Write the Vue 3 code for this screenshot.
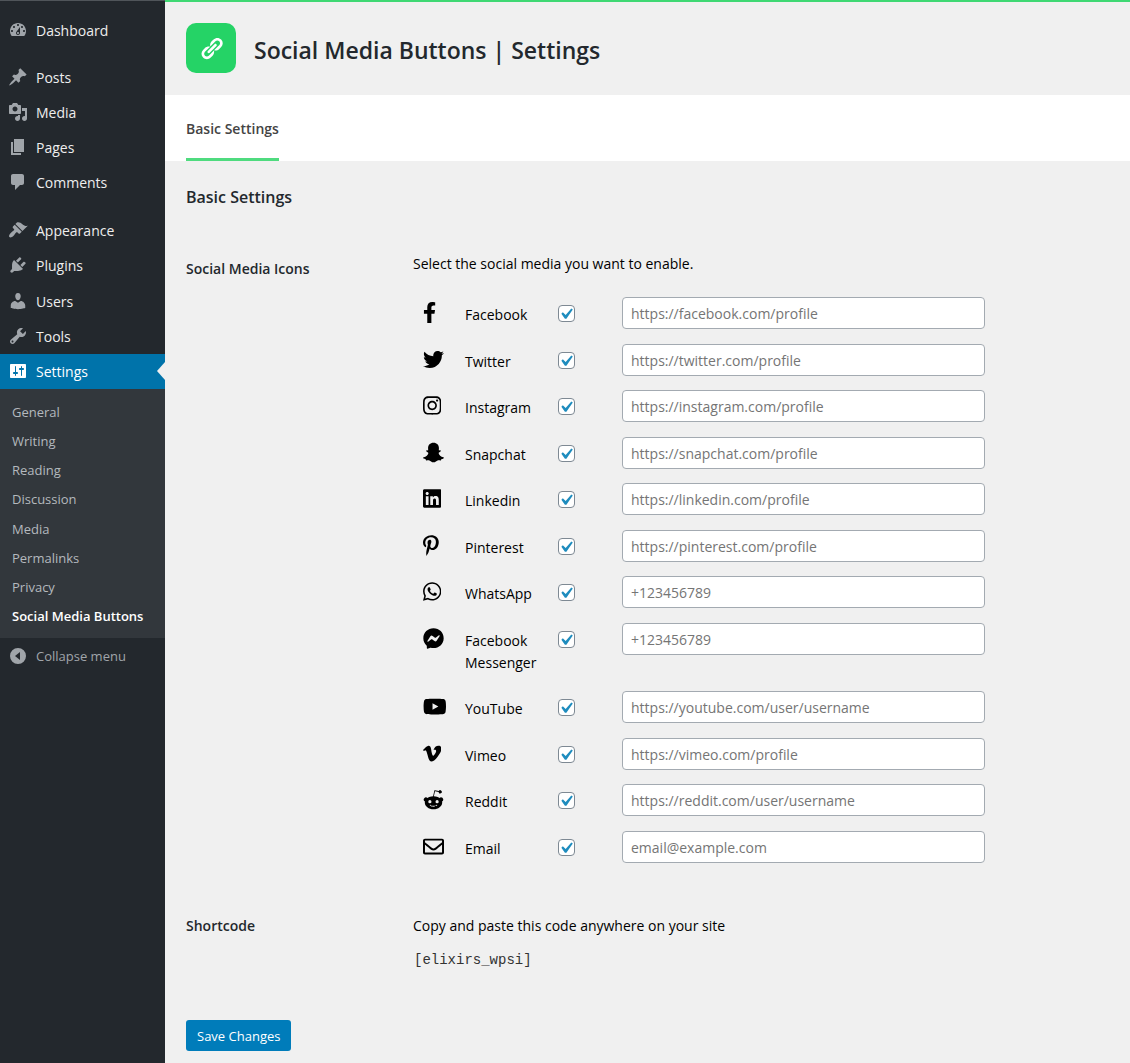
<script setup>
import { reactive } from 'vue'

const menuGroups = [
  [
    { name: 'Dashboard', icon: 'M3.76 16h12.48c1.1-1.37 1.76-3.11 1.76-5 0-4.42-3.58-8-8-8s-8 3.58-8 8c0 1.89.66 3.63 1.76 5zM10 4c.55 0 1 .45 1 1s-.45 1-1 1-1-.45-1-1 .45-1 1-1zM6 6c.55 0 1 .45 1 1s-.45 1-1 1-1-.45-1-1 .45-1 1-1zm8 0c.55 0 1 .45 1 1s-.45 1-1 1-1-.45-1-1 .45-1 1-1zm-5.37 5.55L12 7v6c0 1.1-.9 2-2 2s-2-.9-2-2c0-.57.24-1.08.63-1.45zM4 10c.55 0 1 .45 1 1s-.45 1-1 1-1-.45-1-1 .45-1 1-1zm12 0c.55 0 1 .45 1 1s-.45 1-1 1-1-.45-1-1 .45-1 1-1zm-5 3c0-.55-.45-1-1-1s-1 .45-1 1 .45 1 1 1 1-.45 1-1z' },
  ],
  [
    { name: 'Posts', icon: 'M10.44 3.02l1.82-1.82 6.36 6.35-1.83 1.82c-1.05-.68-2.48-.57-3.41.36l-.75.75c-.92.93-1.04 2.35-.35 3.41l-1.83 1.82-2.41-2.41-2.8 2.79c-.42.42-3.38 2.71-3.8 2.29s1.86-3.39 2.28-3.81l2.79-2.79L4.1 9.36l1.83-1.82c1.05.69 2.48.57 3.4-.36l.75-.75c.93-.92 1.05-2.35.36-3.41z' },
    { name: 'Media', icon: 'M13 11V4c0-.55-.45-1-1-1h-1.67L9 1H5L3.67 3H2c-.55 0-1 .45-1 1v7c0 .55.45 1 1 1h10c.55 0 1-.45 1-1zM7 4.5c1.38 0 2.5 1.12 2.5 2.5S8.38 9.5 7 9.5 4.5 8.38 4.5 7 5.62 4.5 7 4.5zM14 6h5v10.5c0 1.38-1.12 2.5-2.5 2.5S14 17.88 14 16.5s1.12-2.5 2.5-2.5c.17 0 .34.02.5.05V9h-3V6zm-4 8.05V13h2v3.5c0 1.38-1.12 2.5-2.5 2.5S7 17.88 7 16.5 8.12 14 9.5 14c.17 0 .34.02.5.05z' },
    { name: 'Pages', icon: 'M6 15V2h10v13H6zm-1 1h8v2H3V5h2v11z' },
    { name: 'Comments', icon: 'M5 2h9c1.1 0 2 .9 2 2v7c0 1.1-.9 2-2 2h-2l-5 5v-5H5c-1.1 0-2-.9-2-2V4c0-1.1.9-2 2-2z' },
  ],
  [
    { name: 'Appearance', icon: 'M14.48 11.06L7.41 3.99l1.5-1.5c.5-.56 2.3-.47 3.51.32 1.21.8 1.43 1.28 2.91 2.1 1.18.64 2.45 1.26 4.45.85zm-.71.71L6.7 4.7 4.93 6.47c-.39.39-.39 1.02 0 1.41l1.06 1.06c.39.39.39 1.03 0 1.42-.6.6-1.43 1.11-2.21 1.69-.35.26-.7.53-1.01.84C1.43 14.23.4 16.08 1.4 17.07c.99 1 2.84-.03 4.18-1.36.31-.31.58-.66.85-1.02.57-.78 1.08-1.61 1.69-2.21.39-.39 1.02-.39 1.41 0l1.06 1.06c.39.39 1.02.39 1.41 0z' },
    { name: 'Plugins', icon: 'M13.11 4.36L9.87 7.6 8 5.73l3.24-3.24c.35-.34 1.05-.2 1.56.32.52.51.66 1.21.31 1.55zm-8 1.77l.91-1.12 9.01 9.01-1.19.84c-.71.71-2.63 1.16-3.82 1.16H6.14L4.9 17.26c-.59.59-1.54.59-2.12 0-.59-.58-.59-1.53 0-2.12l1.24-1.24v-3.88c0-1.13.4-3.19 1.09-3.89zm7.26 3.97l3.24-3.24c.34-.35 1.04-.21 1.55.31.52.51.66 1.21.31 1.55l-3.24 3.25z' },
    { name: 'Users', icon: 'M10 9.25c-2.27 0-2.73-3.44-2.73-3.44C7 4.02 7.82 2 9.97 2c2.16 0 2.98 2.02 2.71 3.81 0 0-.41 3.44-2.68 3.44zm0 2.57L12.72 10c2.39 0 4.52 2.33 4.52 4.53v2.49s-3.65 1.13-7.24 1.13c-3.65 0-7.24-1.13-7.24-1.13v-2.49c0-2.25 1.94-4.48 4.47-4.48z' },
    { name: 'Tools', icon: 'M16.68 9.77c-1.34 1.34-3.3 1.67-4.95.99l-5.41 6.52c-.99.99-2.59.99-3.58 0s-.99-2.59 0-3.57l6.52-5.42c-.68-1.65-.35-3.61.99-4.95 1.28-1.28 3.12-1.62 4.72-1.06l-2.89 2.89 2.82 2.82 2.86-2.87c.53 1.58.18 3.39-1.08 4.65zM3.81 16.21c.4.39 1.04.39 1.43 0 .4-.4.4-1.04 0-1.43-.39-.4-1.03-.4-1.43 0-.39.39-.39 1.03 0 1.43z' },
    { name: 'Settings', current: true, icon: 'M18 16V4c0-.55-.45-1-1-1H3c-.55 0-1 .45-1 1v12c0 .55.45 1 1 1h14c.55 0 1-.45 1-1zM8 11h1c.55 0 1 .45 1 1s-.45 1-1 1H8v1.5c0 .28-.22.5-.5.5s-.5-.22-.5-.5V13H6c-.55 0-1-.45-1-1s.45-1 1-1h1V5.5c0-.28.22-.5.5-.5s.5.22.5.5V11zm5-2h-1c-.55 0-1-.45-1-1s.45-1 1-1h1V5.5c0-.28.22-.5.5-.5s.5.22.5.5V7h1c.55 0 1 .45 1 1s-.45 1-1 1h-1v5.5c0 .28-.22.5-.5.5s-.5-.22-.5-.5V9z' },
  ],
]

const submenu = ['General', 'Writing', 'Reading', 'Discussion', 'Media', 'Permalinks', 'Privacy', 'Social Media Buttons']

const networks = reactive([
  { id: 'facebook', name: 'Facebook', on: true, url: '', hint: 'https://facebook.com/profile', w: 320, d: 'M279.14 288l14.22-92.66h-88.91v-60.13c0-25.35 12.42-50.06 52.24-50.06h40.42V6.26S260.43 0 225.36 0c-73.22 0-121.08 44.38-121.08 124.72v70.62H22.89V288h81.39v224h100.17V288z' },
  { id: 'twitter', name: 'Twitter', on: true, url: '', hint: 'https://twitter.com/profile', w: 512, d: 'M459.37 151.716c.325 4.548.325 9.097.325 13.645 0 138.72-105.583 298.558-298.558 298.558-59.452 0-114.68-17.219-161.137-47.106 8.447.974 16.568 1.299 25.34 1.299 49.055 0 94.213-16.568 130.274-44.832-46.132-.975-84.792-31.188-98.112-72.772 6.498.974 12.995 1.624 19.818 1.624 9.421 0 18.843-1.3 27.614-3.573-48.081-9.747-84.143-51.98-84.143-102.985v-1.299c13.969 7.797 30.214 12.67 47.431 13.319-28.264-18.843-46.781-51.005-46.781-87.391 0-19.492 5.197-37.36 14.294-52.954 51.655 63.675 129.3 105.258 216.365 109.807-1.624-7.797-2.599-15.918-2.599-24.04 0-57.828 46.782-104.934 104.934-104.934 30.213 0 57.502 12.67 76.67 33.137 23.715-4.548 46.456-13.32 66.599-25.34-7.798 24.366-24.366 44.833-46.132 57.827 21.117-2.273 41.584-8.122 60.426-16.243-14.292 20.791-32.161 39.308-52.628 54.253z' },
  { id: 'instagram', name: 'Instagram', on: true, url: '', hint: 'https://instagram.com/profile', w: 448, d: 'M224.1 141c-63.6 0-114.9 51.3-114.9 114.9s51.3 114.9 114.9 114.9S339 319.5 339 255.9 287.7 141 224.1 141zm0 189.6c-41.1 0-74.7-33.5-74.7-74.7s33.5-74.7 74.7-74.7 74.7 33.5 74.7 74.7-33.6 74.7-74.7 74.7zm146.4-194.3c0 14.9-12 26.8-26.8 26.8-14.9 0-26.8-12-26.8-26.8s12-26.8 26.8-26.8 26.8 12 26.8 26.8zm76.1 27.2c-1.7-35.9-9.9-67.7-36.2-93.9-26.2-26.2-58-34.4-93.9-36.2-37-2.1-147.9-2.1-184.9 0-35.8 1.7-67.6 9.9-93.9 36.1s-34.4 58-36.2 93.9c-2.1 37-2.1 147.9 0 184.9 1.7 35.9 9.9 67.7 36.2 93.9s58 34.4 93.9 36.2c37 2.1 147.9 2.1 184.9 0 35.9-1.7 67.7-9.9 93.9-36.2 26.2-26.2 34.4-58 36.2-93.9 2.1-37 2.1-147.8 0-184.8zM398.8 388c-7.8 19.6-22.9 34.7-42.6 42.6-29.5 11.7-99.5 9-132.1 9s-102.7 2.6-132.1-9c-19.6-7.8-34.7-22.9-42.6-42.6-11.7-29.5-9-99.5-9-132.1s-2.6-102.7 9-132.1c7.8-19.6 22.9-34.7 42.6-42.6 29.5-11.7 99.5-9 132.1-9s102.7-2.6 132.1 9c19.6 7.8 34.7 22.9 42.6 42.6 11.7 29.5 9 99.5 9 132.1s2.7 102.7-9 132.1z' },
  { id: 'snapchat', name: 'Snapchat', on: true, url: '', hint: 'https://snapchat.com/profile', w: 512, d: 'M256 16c-84 0-132 56-132 128 0 22 2 42 3 60-14 6-34-8-45 4-12 14 4 28 20 36 14 7 30 10 28 28-8 40-54 88-114 98-24 6-14 28 8 36 18 7 38 8 42 16 4 10 0 24 16 26 22 2 46-8 74 2 26 10 52 46 100 46s74-36 100-46c28-10 52 0 74-2 16-2 12-16 16-26 4-8 24-9 42-16 22-8 32-30 8-36-60-10-106-58-114-98-2-18 14-21 28-28 16-8 32-22 20-36-11-12-31 2-45-4 1-18 3-38 3-60 0-72-48-128-132-128z' },
  { id: 'linkedin', name: 'Linkedin', on: true, url: '', hint: 'https://linkedin.com/profile', w: 448, d: 'M416 32H31.9C14.3 32 0 46.5 0 64.3v383.4C0 465.5 14.3 480 31.9 480H416c17.6 0 32-14.5 32-32.3V64.3c0-17.8-14.4-32.3-32-32.3zM135.4 416H69V202.2h66.5V416zm-33.2-243c-21.3 0-38.5-17.3-38.5-38.5S80.9 96 102.2 96c21.2 0 38.5 17.3 38.5 38.5 0 21.3-17.2 38.5-38.5 38.5zm282.1 243h-66.4V312c0-24.8-.5-56.7-34.5-56.7-34.6 0-39.9 27-39.9 54.9V416h-66.4V202.2h63.7v29.2h.9c8.9-16.8 30.6-34.5 62.9-34.5 67.2 0 79.7 44.3 79.7 101.9V416z' },
  { id: 'pinterest', name: 'Pinterest', on: true, url: '', hint: 'https://pinterest.com/profile', w: 384, d: 'M204 6.5C101.4 6.5 0 74.9 0 185.6 0 256 39.6 296 63.6 296c9.9 0 15.6-27.6 15.6-35.4 0-9.3-23.7-29.1-23.7-67.8 0-80.4 61.2-137.4 140.4-137.4 68.1 0 118.5 38.7 118.5 109.8 0 53.1-21.3 152.7-90.3 152.7-24.9 0-46.2-18-46.2-43.8 0-37.8 26.4-74.4 26.4-113.4 0-66.2-93.9-54.2-93.9 25.8 0 16.8 2.1 35.4 9.6 50.7-13.8 59.4-42 147.9-42 209.1 0 18.9 2.7 37.5 4.5 56.4 3.4 3.8 1.7 3.4 6.9 1.5 50.4-69 48.6-82.5 71.4-172.8 12.3 23.4 44.1 36 69.3 36 106.2 0 153.9-103.5 153.9-196.8C384 71.3 298.2 6.5 204 6.5z' },
  { id: 'whatsapp', name: 'WhatsApp', on: true, url: '', hint: '+123456789', w: 448, d: 'M380.9 97.1C339 55.1 283.2 32 223.9 32c-122.4 0-222 99.6-222 222 0 39.1 10.2 77.3 29.6 111L0 480l117.7-30.9c32.4 17.7 68.9 27 106.1 27h.1c122.3 0 224.1-99.6 224.1-222 0-59.3-25.2-115-67.1-157zm-157 341.6c-33.2 0-65.7-8.9-94-25.7l-6.7-4-69.8 18.3L72 359.2l-4.4-7c-18.5-29.4-28.2-63.3-28.2-98.2 0-101.7 82.8-184.5 184.6-184.5 49.3 0 95.6 19.2 130.4 54.1 34.8 34.9 56.2 81.2 56.1 130.5 0 101.8-84.9 184.6-186.6 184.6zm101.2-138.2c-5.5-2.8-32.8-16.2-37.9-18-5.1-1.9-8.8-2.8-12.5 2.8-3.7 5.6-14.3 18-17.6 21.8-3.2 3.7-6.5 4.2-12 1.4-32.6-16.3-54-29.1-75.5-66-5.7-9.8 5.7-9.1 16.3-30.3 1.8-3.7.9-6.9-.5-9.7-1.4-2.8-12.5-30.1-17.1-41.2-4.5-10.8-9.1-9.3-12.5-9.5-3.2-.2-6.9-.2-10.6-.2-3.7 0-9.7 1.4-14.8 6.9-5.1 5.6-19.4 19-19.4 46.3 0 27.3 19.9 53.7 22.6 57.4 2.8 3.7 39.1 59.7 94.8 83.8 35.2 15.2 49 16.5 66.6 13.9 10.7-1.6 32.8-13.4 37.4-26.4 4.6-13 4.6-24.1 3.2-26.4-1.3-2.5-5-3.9-10.5-6.6z' },
  { id: 'messenger', name: 'Facebook Messenger', on: true, url: '', hint: '+123456789', w: 512, d: 'M256.55 8C116.52 8 8 110.34 8 248.57c0 72.3 29.71 134.78 78.07 177.94 8.35 7.51 6.63 11.86 8.05 58.23A19.92 19.92 0 0 0 122 502.31c52.91-23.3 53.59-25.14 62.56-22.7C337.85 521.8 504 423.7 504 248.57 504 110.34 396.59 8 256.55 8zm149.24 185.13l-73 115.57a37.37 37.37 0 0 1-53.91 9.93l-58.08-43.47a15 15 0 0 0-18 0l-78.37 59.44c-10.46 7.93-24.16-4.6-17.11-15.67l73-115.57a37.36 37.36 0 0 1 53.91-9.93l58.06 43.46a15 15 0 0 0 18 0l78.41-59.38c10.44-7.98 24.14 4.54 17.09 15.62z' },
  { id: 'youtube', name: 'YouTube', on: true, url: '', hint: 'https://youtube.com/user/username', w: 576, d: 'M549.655 124.083c-6.281-23.65-24.787-42.276-48.284-48.597C458.781 64 288 64 288 64S117.22 64 74.629 75.486c-23.497 6.322-42.003 24.947-48.284 48.597-11.412 42.867-11.412 132.305-11.412 132.305s0 89.438 11.412 132.305c6.281 23.65 24.787 41.5 48.284 47.821C117.22 448 288 448 288 448s170.78 0 213.371-11.486c23.497-6.321 42.003-24.171 48.284-47.821 11.412-42.867 11.412-132.305 11.412-132.305s0-89.438-11.412-132.305zm-317.51 213.508V175.185l142.739 81.205-142.739 81.201z' },
  { id: 'vimeo', name: 'Vimeo', on: true, url: '', hint: 'https://vimeo.com/profile', w: 448, d: 'M447.8 153.6c-2 43.6-32.4 103.3-91.4 179.1-60.9 79.2-112.4 118.8-154.6 118.8-26.1 0-48.2-24.1-66.3-72.3C100.3 250 85.3 174.3 56.2 174.3c-3.4 0-15.1 7.1-35.2 21.1L0 168.2c51.6-45.3 100.9-95.7 131.8-98.5 34.9-3.4 56.3 20.5 64.4 71.5 28.7 181.5 41.4 208.9 93.6 126.7 18.7-29.6 28.8-52.1 30.2-67.6 4.8-45.9-35.8-42.8-63.3-31 22-72.1 64.1-107.1 126.2-105.1 45.8 1.2 67.5 31.1 64.9 89.4z' },
  { id: 'reddit', name: 'Reddit', on: true, url: '', hint: 'https://reddit.com/user/username', w: 512, d: 'M440 203c-15 0-28 6-38 16-36-25-84-40-137-42l28-124 88 20a38 38 0 1 0 4-22l-97-22c-5-1-10 2-11 7l-31 141c-53 2-101 18-136 42a53 53 0 1 0-63 84c-2 9-3 18-3 27 0 92 95 166 212 166s212-74 212-166c0-9-1-18-3-27A53 53 0 0 0 440 203zM129 309a39 39 0 1 1 78 0 39 39 0 1 1-78 0zm215 93c-38 38-138 38-176 0-4-4-4-10 0-14 3-4 10-4 14 0 28 29 118 30 148 0 4-4 10-4 14 0 4 4 4 10 0 14zm0-54a39 39 0 1 1 0-78 39 39 0 1 1 0 78z' },
  { id: 'email', name: 'Email', on: true, url: '', hint: 'email@example.com', w: 512, d: 'M464 64H48C21.49 64 0 85.49 0 112v288c0 26.51 21.49 48 48 48h416c26.51 0 48-21.49 48-48V112c0-26.51-21.49-48-48-48zm0 48v40.805c-22.422 18.259-58.168 46.651-134.587 106.49-16.841 13.247-50.201 45.072-73.413 44.701-23.208.375-56.579-31.459-73.413-44.701C106.18 199.465 70.425 171.067 48 152.805V112h416zM48 400V214.398c22.914 18.251 55.409 43.862 104.938 82.646 21.857 17.205 60.134 55.186 103.062 54.955 42.717.231 80.509-37.199 103.053-54.947 49.528-38.783 82.032-64.401 104.947-82.653V400H48z' },
])
</script>

<template>
  <div class="admin">
    <nav class="sidebar" aria-label="Main menu">
      <ul v-for="(group, i) in menuGroups" :key="i" class="menu">
        <li v-for="item in group" :key="item.name">
          <a href="#" class="menu-link" :class="{ current: item.current }">
            <svg viewBox="0 0 20 20" aria-hidden="true"><path :d="item.icon" /></svg>
            <span>{{ item.name }}</span>
          </a>
        </li>
      </ul>
      <ul class="submenu">
        <li v-for="name in submenu" :key="name">
          <a href="#" :class="{ active: name === 'Social Media Buttons' }">{{ name }}</a>
        </li>
      </ul>
      <button type="button" class="collapse">
        <svg viewBox="0 0 20 20" aria-hidden="true"><path fill-rule="evenodd" d="M10 2a8 8 0 1 0 0 16 8 8 0 0 0 0-16zM12 6v8l-5-4z" /></svg>
        <span>Collapse menu</span>
      </button>
    </nav>

    <main class="content">
      <header class="page-head">
        <span class="logo">
          <svg viewBox="0 0 20 20" aria-hidden="true"><path d="M17.74 2.76c1.68 1.69 1.68 4.41 0 6.1l-1.53 1.52c-1.12 1.12-2.7 1.47-4.14 1.09l2.62-2.61.76-.77.76-.76c.84-.84.84-2.2 0-3.04-.84-.85-2.2-.85-3.04 0l-.77.76-3.38 3.38c-.37-1.44-.02-3.02 1.1-4.14l1.52-1.53c1.69-1.68 4.42-1.68 6.1 0zM8.59 13.43l5.34-5.34c.42-.42.42-1.1 0-1.52-.44-.43-1.13-.39-1.53 0l-5.33 5.34c-.42.42-.42 1.1 0 1.52.44.43 1.13.39 1.52 0zm-.76 2.29l4.14-4.15c.38 1.44.03 3.02-1.09 4.14l-1.52 1.53c-1.69 1.68-4.41 1.68-6.1 0-1.68-1.68-1.68-4.42 0-6.1l1.53-1.52c1.12-1.12 2.7-1.47 4.14-1.1l-4.14 4.15c-.85.84-.85 2.2 0 3.05.84.84 2.2.84 3.04 0z" /></svg>
        </span>
        <h1>Social Media Buttons | Settings</h1>
      </header>
      <nav class="tabs" aria-label="Sections"><a href="#" class="tab">Basic Settings</a></nav>

      <form class="settings" @submit.prevent>
        <h2>Basic Settings</h2>
        <section class="field">
          <h3>Social Media Icons</h3>
          <div class="field-body">
            <p>Select the social media you want to enable.</p>
            <ul class="networks">
              <li v-for="n in networks" :key="n.id">
                <span class="glyph"><svg :viewBox="`0 0 ${n.w} 512`" aria-hidden="true"><path :d="n.d" fill-rule="evenodd" /></svg></span>
                <label :for="`${n.id}-on`">{{ n.name }}</label>
                <span class="check">
                  <input :id="`${n.id}-on`" v-model="n.on" type="checkbox">
                  <svg v-if="n.on" viewBox="0 0 20 20" aria-hidden="true"><path d="M14.83 4.89l1.34.94-5.81 8.38H9.02L5.78 9.67l1.34-1.25 2.57 2.4z" /></svg>
                </span>
                <input v-model="n.url" class="text" type="text" :placeholder="n.hint" :aria-label="`${n.name} address`">
              </li>
            </ul>
          </div>
        </section>
        <section class="field shortcode">
          <h3>Shortcode</h3>
          <div class="field-body">
            <p>Copy and paste this code anywhere on your site</p>
            <code>[elixirs_wpsi]</code>
          </div>
        </section>
        <button type="submit" class="save">Save Changes</button>
      </form>
    </main>
  </div>
</template>

<style>
body {
  margin: 0;
  background: #f0f0f0;
}
</style>

<style scoped>
.admin {
  display: flex;
  min-height: 100vh;
  font: 14px/22px "Open Sans", "Noto Sans", sans-serif;
  color: #000;
}
ul, h1, h2, h3, p {
  margin: 0;
  padding: 0;
  list-style: none;
}
a { text-decoration: none; }
svg { display: block; fill: currentColor; }

.sidebar {
  box-sizing: border-box;
  flex: 0 0 165px;
  padding-top: 11px;
  border-top: 1px solid #50555a;
  background: #23282d;
}
.menu {
  display: flex;
  flex-direction: column;
  margin-bottom: 12px;
}
.menu:nth-of-type(2) { height: 141px; }
.menu:nth-of-type(3) {
  height: 177px;
  margin-bottom: 0;
}
.menu li {
  display: flex;
  flex: 1;
}
.menu-link, .collapse {
  position: relative;
  display: flex;
  flex: 1;
  align-items: center;
  gap: 8px;
  min-height: 35px;
  padding: 0 8px;
  color: #eee;
}
.menu-link span { padding-top: 2px; }
.menu-link svg, .collapse svg {
  width: 20px;
  height: 20px;
  color: #a0a5aa;
}
.menu-link.current, .menu-link.current svg { color: #fff; }
.menu-link.current { background: #0073aa; }
.menu-link.current::after {
  content: "";
  position: absolute;
  right: 0;
  top: 50%;
  margin-top: -9px;
  border: solid transparent;
  border-width: 9px 8px 9px 0;
  border-right-color: #f0f0f0;
}
.submenu {
  display: grid;
  grid-auto-rows: 1fr;
  box-sizing: border-box;
  height: 249px;
  padding: 8px 0 7px 12px;
  background: #32373c;
  font-size: 13px;
}
.submenu li {
  display: flex;
  align-items: center;
}
.submenu a { color: #b4b9be; }
.submenu a.active {
  color: #fff;
  font-weight: 600;
}
.collapse {
  width: 100%;
  border: 0;
  background: none;
  font: inherit;
  font-size: 13px;
  color: #a0a5aa;
}

.content {
  flex: 1;
  min-width: 0;
  border-top: 2px solid #3fd873;
}
.page-head {
  display: flex;
  align-items: center;
  gap: 18px;
  padding: 21px 21px 22px;
}
.logo {
  display: grid;
  place-items: center;
  width: 50px;
  height: 50px;
  border-radius: 10px;
  background: #25d366;
  color: #fff;
}
.logo svg {
  width: 25px;
  height: 25px;
}
h1 {
  padding-top: 3px;
  font-size: 23px;
  line-height: 30px;
  font-weight: 600;
  color: #23282d;
}
.tabs {
  display: flex;
  padding: 0 21px;
  background: #fff;
}
.tab {
  padding: 23px 0 18px;
  border-bottom: 3px solid #4fdb7f;
  font-weight: 600;
  color: #444;
}
.settings { padding: 24px 21px 12px; }
h2 {
  font-size: 16px;
  line-height: 24px;
  font-weight: 600;
  color: #23282d;
}
.field {
  display: flex;
  margin-top: 44px;
}
h3 {
  flex: 0 0 227px;
  padding-top: 5px;
  font-size: 14px;
  line-height: 22px;
  font-weight: 600;
  color: #23282d;
}
.field-body {
  flex: 1;
  min-width: 0;
}
.networks {
  padding: 22px 0 0 10px;
}
.networks li {
  display: flex;
  align-items: flex-start;
  min-height: 46px;
}
.networks li:nth-child(odd) { min-height: 47px; }
.glyph { flex: 0 0 42px; }
.glyph svg {
  height: 21px;
  margin-top: 5px;
}
.networks label {
  flex: 0 0 76px;
  margin-right: 17px;
  padding: 7px 0 17px;
  line-height: 22px;
}
.networks li:not(:nth-child(8)) label { padding-bottom: 0; }
.check {
  position: relative;
  flex: 0 0 64px;
  padding-top: 8px;
}
.check input {
  appearance: none;
  display: block;
  box-sizing: border-box;
  width: 17px;
  height: 17px;
  margin: 0;
  border: 1px solid #7e8993;
  border-radius: 4px;
  background: #fff;
}
.check svg {
  position: absolute;
  left: -3px;
  top: 6px;
  width: 22px;
  height: 22px;
  color: #1e8cbe;
  pointer-events: none;
}
.text {
  box-sizing: border-box;
  flex: 0 1 363px;
  min-width: 0;
  height: 32px;
  padding: 1px 8px;
  border: 1px solid #a3aab1;
  border-radius: 4px;
  background: #fff;
  font: inherit;
}
.text::placeholder { color: #757575; }
.shortcode { margin-top: 38px; }
.shortcode h3 { padding-top: 0; }
code {
  display: block;
  padding: 12px 0 0 1px;
  font: 14px/22px "Liberation Mono", monospace;
  color: #333;
}
.save {
  height: 31px;
  margin-top: 49px;
  padding: 0 11px;
  border: 0;
  border-radius: 3px;
  background: #007cba;
  font: inherit;
  font-size: 13px;
  color: #fff;
}
</style>
